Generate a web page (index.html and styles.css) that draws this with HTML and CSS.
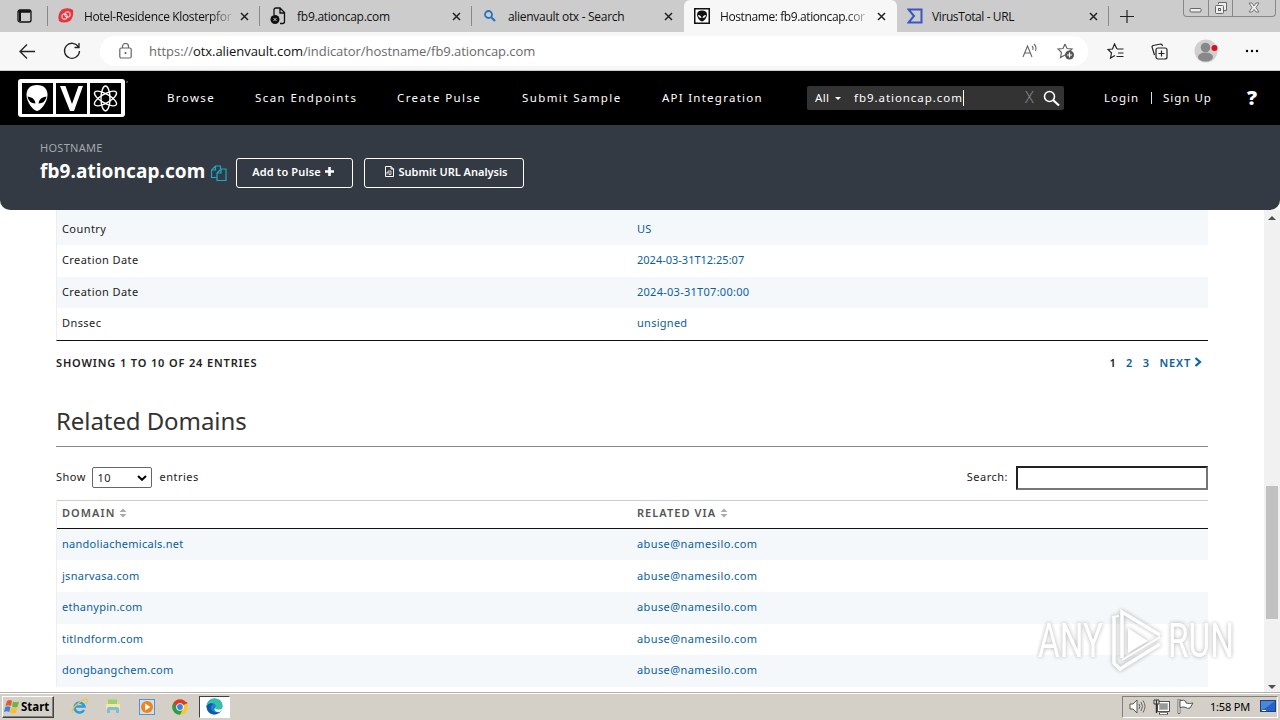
FILE: index.html
```html
<!DOCTYPE html>
<html lang="en">
<head>
    <meta charset="UTF-8">
    <title>Hostname: fb9.ationcap.com</title>
    <link rel="stylesheet" href="styles.css">
</head>
<body>
    <!-- Browser tabs -->
    <div class="tabs">
        <div class="tab-menu">
            <svg width="15" height="14" viewBox="0 0 15 14"><rect x="1" y="1" width="13" height="12" rx="2" fill="none" stroke="#111" stroke-width="1.3"/><path d="M1.500 2.500h12" stroke="#111" stroke-width="2.5"/><path d="M3 3v9" stroke="#111" stroke-width="2"/></svg>
        </div>
        <div class="tab">
            <svg class="favicon" width="16" height="16" viewBox="0 0 16 16"><path d="M4 1.5Q11-1 15 2Q16 9 12 13Q5 16 1 13Q-1 6 4 1.5Z" fill="#e8343c"/><rect x="4" y="6" width="5" height="5" rx="1.5" fill="none" stroke="#fff"/><rect x="7" y="4" width="5" height="5" rx="1.5" fill="none" stroke="#fff"/></svg>
            <span class="tab-title fade">Hotel-Residence Klosterpfor</span>
            <svg class="close" width="9" height="9" viewBox="0 0 9 9"><path d="M1 1l7 7M8 1L1 8"/></svg>
        </div>
        <div class="tab">
            <svg class="favicon" width="16" height="18" viewBox="0 0 16 18"><path d="M4 8V3q0-2 2-2h4l4.500 4.500V14.500q0 2-2 2H10M10 1v5h4.500" fill="none" stroke="#111" stroke-width="1.300"/><circle cx="5" cy="12.500" r="4.500" fill="#111"/><path d="M3.500 11l3 3m0-3l-3 3" stroke="#ccc"/></svg>
            <span class="tab-title short">fb9.ationcap.com</span>
            <svg class="close" width="9" height="9" viewBox="0 0 9 9"><path d="M1 1l7 7M8 1L1 8"/></svg>
        </div>
        <div class="tab last">
            <svg class="favicon" width="16" height="16" viewBox="0 0 16 16"><circle cx="6.500" cy="6.500" r="3.500" fill="none" stroke="#2474bd" stroke-width="1.800"/><path d="M9 9l4 4" stroke="#2474bd" stroke-width="2.200"/></svg>
            <span class="tab-title search-title">alienvault otx - Search</span>
            <svg class="close" width="9" height="9" viewBox="0 0 9 9"><path d="M1 1l7 7M8 1L1 8"/></svg>
        </div>
        <div class="tab active">
            <svg class="favicon" width="16" height="16" viewBox="0 0 16 16"><rect x=".75" y=".75" width="14.500" height="14.500" fill="#fff" stroke="#111" stroke-width="1.500"/><path d="M8 2.500c3 0 5 1.500 5 4 0 3-3 7-5 7s-5-4-5-7c0-2.500 2-4 5-4z" fill="#111"/><path d="M4 7q3 0 3.500 3Q4.500 10 4 7zM12 7q-3 0-3.500 3 3 0 3.500-3z" fill="#fff"/></svg>
            <span class="tab-title fade host-title">Hostname: fb9.ationcap.cor</span>
            <svg class="close" width="9" height="9" viewBox="0 0 9 9"><path d="M1 1l7 7M8 1L1 8"/></svg>
        </div>
        <div class="tab">
            <svg class="favicon" width="16" height="16" viewBox="0 0 16 16"><path d="M1.500 1.500h13v13h-13L7 8z" fill="none" stroke="#3b55c8" stroke-width="2"/></svg>
            <span class="tab-title vt-title">VirusTotal - URL</span>
            <svg class="close" width="9" height="9" viewBox="0 0 9 9"><path d="M1 1l7 7M8 1L1 8"/></svg>
        </div>
        <svg class="new-tab" width="14" height="13" viewBox="0 0 14 13"><path d="M7 0v13M0 6.500h14" stroke="#222" stroke-width="1.200"/></svg>
        <div class="window-buttons">
            <span><svg width="13" height="15" viewBox="0 0 13 15"><rect x="1" y="8.500" width="11" height="3.500" rx="1" fill="#eee" stroke="#666"/></svg></span>
            <span><svg width="14" height="15" viewBox="0 0 14 15"><path d="M4.500 4V2.500h8v8H10" fill="#eee" stroke="#666"/><rect x="1.500" y="5.500" width="8" height="8" rx="1" fill="#eee" stroke="#666"/><rect x="4.500" y="8.500" width="2" height="2" fill="none" stroke="#666"/></svg></span>
            <span class="wide"><svg width="14" height="15" viewBox="0 0 14 15"><path d="M2 3h3l2 3 2-3h3L9 7.500 12 12H9L7 9.500 5 12H2l3-4.500z" fill="#eee" stroke="#777"/></svg></span>
        </div>
    </div>

    <!-- Address bar -->
    <div class="toolbar">
        <svg class="back" width="17" height="15" viewBox="0 0 17 15"><path d="M8 .5L1 7.500l7 7M1 7.500h15" fill="none" stroke="#222" stroke-width="1.300"/></svg>
        <svg class="reload" width="18" height="18" viewBox="0 0 18 18"><path d="M15.500 5A7.500 7.500 0 1 0 16.500 9M16 1v4.500h-4.500" fill="none" stroke="#222" stroke-width="1.300"/></svg>
        <div class="address">
            <svg width="13" height="16" viewBox="0 0 13 16"><rect x=".8" y="5" width="11.400" height="10" rx="1.500" fill="none" stroke="#666" stroke-width="1.200"/><path d="M3.500 5V3.500a3 3 0 0 1 6 0V5" fill="none" stroke="#666" stroke-width="1.200"/><circle cx="6.500" cy="10" r="1" fill="#555"/></svg>
            <span class="url">https://<b>otx.alienvault.com</b>/indicator/hostname/fb9.ationcap.com</span>
            <svg class="read" width="17" height="16" viewBox="0 0 17 16"><path d="M1 14L5.500 3 10 14M2.500 10h6M10 3q1.500 1.500 1 4M12 1q3 3 1.500 7" fill="none" stroke="#666" stroke-width="1.100"/></svg>
            <svg class="fav" width="18" height="17" viewBox="0 0 18 17"><path d="M8 1l2 4.500 5 .5-3.700 3.500M8 12l-4.500 2.500 1-5L1 6l5-.5L8 1" fill="none" stroke="#666" stroke-width="1.200"/><circle cx="12.500" cy="12" r="4.500" fill="#555"/><path d="M10 12h5M12.500 9.500v5" stroke="#fff" stroke-width="1.200"/></svg>
        </div>
        <svg class="t-star" width="18" height="17" viewBox="0 0 18 17"><path d="M10 6L7.500 1 5.500 6 1 6.500l3.500 3.500-1 5L8 12.500M10 6h6.500M11 10h5.500M9.500 13.500h7" fill="none" stroke="#222" stroke-width="1.200"/></svg>
        <svg class="t-coll" width="17" height="17" viewBox="0 0 17 17"><path d="M3.500 12L1 4q0-1 1-1.500L10 1q1 0 1.500 2" fill="none" stroke="#222" stroke-width="1.200"/><rect x="5" y="5" width="11" height="11" rx="2" fill="none" stroke="#222" stroke-width="1.200"/><path d="M10.500 7.500v6M7.500 10.500h6" stroke="#222" stroke-width="1.200"/></svg>
        <svg class="t-user" width="24" height="24" viewBox="0 0 24 24"><circle cx="12" cy="12" r="11.500" fill="#d2d0ce"/><circle cx="11.500" cy="8.500" r="4.800" fill="#888"/><ellipse cx="11.500" cy="18" rx="7.500" ry="4.500" fill="#888"/><circle cx="20.500" cy="9" r="3" fill="#e00b1c"/></svg>
        <svg class="t-more" width="14" height="4" viewBox="0 0 14 4"><circle cx="2" cy="2" r="1.200"/><circle cx="7" cy="2" r="1.200"/><circle cx="12" cy="2" r="1.200"/></svg>
    </div>

    <!-- Site navigation -->
    <div class="site-nav">
        <svg class="logo" width="110" height="40" viewBox="0 0 110 40">
            <rect x="0" y="1" width="107" height="38" rx="3" fill="#fff"/>
            <path d="M4 5h31v31H4zM38 5h31v31H38zM72 5h31v31H72z" fill="#000"/>
            <path d="M19 7c7 0 10.500 4 10.500 10 0 7-7 16-10.500 16S8.500 24 8.500 17C8.500 11 12 7 19 7z" fill="#fff"/>
            <path d="M9.500 18.500q7 .5 8 7-7-.5-8-7zM28.500 18.500q-7 .5-8 7 7-.5 8-7z" fill="#000"/>
            <path d="M42 8h5.500l6.500 18 6.500-18H65L56 33h-4z" fill="#fff"/>
            <g fill="none" stroke="#fff" stroke-width="1.400"><ellipse cx="87.500" cy="20.500" rx="4.500" ry="12.500"/><ellipse cx="87.500" cy="20.500" rx="4.500" ry="12.500" transform="rotate(60 87.500 20.500)"/><ellipse cx="87.500" cy="20.500" rx="4.500" ry="12.500" transform="rotate(120 87.500 20.500)"/></g>
            <path d="M108 4h2" stroke="#888"/>
        </svg>
        <span class="n1">Browse</span>
        <span class="n2">Scan Endpoints</span>
        <span class="n3">Create Pulse</span>
        <span class="n4">Submit Sample</span>
        <span class="n5">API Integration</span>
        <div class="nav-search">
            <span class="all">All</span><i class="caret"></i>
            <span class="query">fb9.ationcap.com</span><i class="cursor"></i>
            <span class="clear">X</span>
            <svg width="17" height="17" viewBox="0 0 17 17"><circle cx="6.500" cy="6.500" r="5" fill="none" stroke="#fff" stroke-width="1.600"/><path d="M10 10l6 5.500" stroke="#fff" stroke-width="2.200"/></svg>
        </div>
        <span class="n6">Login</span>
        <i class="bar"></i>
        <span class="n7">Sign Up</span>
        <span class="help">?</span>
    </div>

    <div class="host-header">
        <div class="host-label">HOSTNAME</div>
        <div class="host-row">
            <span class="host-name">fb9.ationcap.com</span>
            <svg class="copy" width="16" height="17" viewBox="0 0 16 17"><path d="M6.500 12.500h-6V5l4-4h5v3M4.500 1v4h-4M6 15.500V8l4-4h5v11.500zM10 4v4H6" fill="none" stroke="#1aa9c8" stroke-width="1.200"/></svg>
            <div class="btn add"><span>Add to Pulse</span><svg width="9" height="9" viewBox="0 0 9 9"><path d="M4.500 0v9M0 4.500h9" stroke="#fff" stroke-width="2.600"/></svg></div>
            <div class="btn submit"><svg width="9" height="11" viewBox="0 0 9 11"><path d="M.5.500h5.500l2.500 2.500v7.500h-8zM6 0v3h3" fill="none" stroke="#fff"/><path d="M2 8.500V6h2v2.500M3 5h3v3.500H4" fill="none" stroke="#fff" stroke-width=".8"/></svg><span>Submit URL Analysis</span></div>
        </div>
    </div>

    <div class="page">
        <div class="content">
            <div class="table whois">
                <div class="row odd first"><span>Country</span><a>US</a></div>
                <div class="row"><span>Creation Date</span><a class="date">2024-03-31T12:25:07</a></div>
                <div class="row odd"><span>Creation Date</span><a>2024-03-31T07:00:00</a></div>
                <div class="row"><span>Dnssec</span><a>unsigned</a></div>
            </div>
            <div class="paging">
                <span class="showing">SHOWING 1 TO 10 OF 24 ENTRIES</span>
                <span class="pages"><span>1</span><a>2</a><a>3</a><a class="next">NEXT</a><svg width="8" height="10" viewBox="0 0 8 10"><path d="M1.500 1l4.500 4-4.500 4" fill="none" stroke="#0468ad" stroke-width="2.300"/></svg></span>
            </div>
            <h2>Related Domains</h2>
            <div class="controls">
                <span>Show</span>
                <span class="select"><span>10</span><svg width="10" height="6" viewBox="0 0 10 6"><path d="M1 1l4 3.800L9 1" fill="none" stroke="#000" stroke-width="2"/></svg></span>
                <span>entries</span>
                <span class="search-label">Search:</span>
                <input type="text" class="search">
            </div>
            <div class="table domains">
                <div class="head">
                    <span>DOMAIN<svg width="8" height="10" viewBox="0 0 8 10"><path d="M.5 4L4 .5 7.500 4zM.5 6L4 9.500 7.500 6z" fill="#aaa"/></svg></span>
                    <span>RELATED VIA<svg width="8" height="10" viewBox="0 0 8 10"><path d="M.5 4L4 .5 7.500 4zM.5 6L4 9.500 7.500 6z" fill="#aaa"/></svg></span>
                </div>
                <div class="row odd"><a>nandoliachemicals.net</a><a class="mail">abuse@namesilo.com</a></div>
                <div class="row"><a>jsnarvasa.com</a><a class="mail">abuse@namesilo.com</a></div>
                <div class="row odd"><a>ethanypin.com</a><a class="mail">abuse@namesilo.com</a></div>
                <div class="row"><a>titlndform.com</a><a class="mail">abuse@namesilo.com</a></div>
                <div class="row odd"><a>dongbangchem.com</a><a class="mail">abuse@namesilo.com</a></div>
            </div>
        </div>
        <div class="scrollbar">
            <i class="up"></i>
            <i class="thumb"></i>
            <i class="down"></i>
        </div>
        <div class="watermark">
            <span>ANY</span>
            <svg width="58" height="66" viewBox="0 0 58 66"><g fill="none" stroke="#fff" stroke-width="3.500"><path d="M15 50V4l38 23M7 9v46l6 6 40-25"/><path d="M5 9l7-1M15 52L53 29" stroke-width="2"/></g><path d="M21 20v25l20-12z" fill="#fff"/></svg>
            <span>RUN</span>
        </div>
    </div>

    <!-- Windows taskbar -->
    <div class="taskbar">
        <div class="start">
            <svg width="16" height="15" viewBox="0 0 16 15"><path d="M3 2q3-2 5 0L7 7Q4 5.500 1.500 7z" fill="#e8562a"/><path d="M9 2.500q3 1.500 6 0L13.500 8Q11 9 8 7.500z" fill="#6fb53c"/><path d="M1.300 8Q4 6.500 6.500 8L5.300 13Q3 11.500 0 13z" fill="#3d82d6"/><path d="M7.500 8.500q3 1.500 5.800.5L12 14q-3 1-6-.5z" fill="#f6c02c"/></svg>
            <span>Start</span>
        </div>
        <svg class="task" width="17" height="17" viewBox="0 0 17 17"><path d="M13 12A5 5 0 1 1 13.500 8.500H4" fill="none" stroke="#2a9ddf" stroke-width="2.500"/><path d="M2 15Q-1 12 7 5.500T16 2q1 1-1 4" fill="none" stroke="#efc34a" stroke-width="1.300"/></svg>
        <svg class="task" width="17" height="17" viewBox="0 0 17 17"><path d="M1 3h6l1 2h7v8H1z" fill="#f2d47a"/><path d="M3 1.500h9v5H3z" fill="#9bd06d"/><path d="M1 6h14v5H1z" fill="#f8e6a5"/><path d="M2 15v-4q0-2 2-2h8q2 0 2 2v4h-3v-3H5v3z" fill="#79bde8"/></svg>
        <svg class="task" width="16" height="16" viewBox="0 0 16 16"><rect x=".5" y=".5" width="15" height="15" fill="#cbe2f5" stroke="#5b93c9"/><circle cx="8" cy="8" r="6" fill="#ef8418"/><path d="M6 4.500v7L11.500 8z" fill="#fff"/></svg>
        <svg class="task" width="16" height="16" viewBox="0 0 16 16"><circle cx="8" cy="8" r="7.800" fill="#f9c925"/><path d="M8 8L1.300 4A7.800 7.800 0 0 1 14.800 4.300z" fill="#db3a2d"/><path d="M8 8L1.300 4A7.800 7.800 0 0 0 8 15.800L11.500 9z" fill="#2f9c4c"/><path d="M5 8L1.300 4 8 3h7l.5 1.500H8z" fill="#db3a2d"/><circle cx="8" cy="8" r="3.800" fill="#fff"/><circle cx="8" cy="8" r="2.900" fill="#3b7ded"/></svg>
        <div class="task-active">
            <svg width="17" height="17" viewBox="0 0 17 17"><circle cx="8.500" cy="8.500" r="8" fill="#1686d0"/><path d="M1 6Q3 .5 9 .5q7 .5 7.500 7 0 4-5 4-3 0-2-2 1-4-3-4.500Q3 5 .5 9z" fill="#35c1a9"/><path d="M.5 8Q3 4 7 6q-3 2-2 5 2 4 8 3.500Q9 18 4.500 15.500.5 13 .5 8z" fill="#1456a8"/><path d="M9.500 9q-1 2 2 2.500 3 .5 5-1.500-1 4-4 4-4 0-4-3z" fill="#fff"/></svg>
        </div>
        <div class="tray">
            <svg width="17" height="15" viewBox="0 0 17 15"><path d="M1 5h3l4-4v13l-4-4H1z" fill="#fff" stroke="#555"/><path d="M10 5q1.500 2.500 0 5M12 3q3 4.500 0 9M14 1.500q4 6 0 12" fill="none" stroke="#666"/></svg>
            <svg width="17" height="16" viewBox="0 0 17 16"><rect x="5.500" y="3.500" width="10" height="8" fill="#999" stroke="#fff" stroke-width="1.500"/><rect x="4.500" y="2.500" width="12" height="10" fill="none" stroke="#333" stroke-width=".8"/><path d="M6 14.500h9" stroke="#333" stroke-width="2"/><path d="M7 14.500h7" stroke="#fff"/><path d="M1 1h5v4H1z" fill="#fff" stroke="#333"/><path d="M3.500 1v13" stroke="#333" stroke-width="1.500"/></svg>
            <svg width="17" height="15" viewBox="0 0 17 15"><path d="M1 0h2v14.500H1z" fill="#fff" stroke="#555" stroke-width=".8"/><path d="M3 1.500q4-1 6 1V4q3 1 7 0l-3 5q-3 1-4-.5-3-1-6 0z" fill="#fff" stroke="#555"/></svg>
            <span class="clock">1:58 PM</span>
            <svg class="desk" width="16" height="13" viewBox="0 0 16 13"><rect x=".5" y=".5" width="15" height="11" fill="#2462c4" stroke="#1c3f8a"/><path d="M1 1h14L4 9 1 10z" fill="#4b86d8"/><path d="M2 10.500h4" stroke="#fff"/></svg>
        </div>
    </div>
</body>
</html>
```
FILE: styles.css
```css
* {
    box-sizing: border-box;
}

body {
    margin: 0;
    width: 1280px;
    height: 720px;
    overflow: hidden;
    display: flex;
    flex-direction: column;
    font-family: 'Noto Sans', 'Open Sans', sans-serif;
    font-size: 11px;
    color: #222;
    background: #fff;
}

svg {
    display: block;
    flex: none;
}

span {
    white-space: nowrap;
}

/* tabs */
.tabs {
    height: 32px;
    flex: none;
    display: flex;
    align-items: center;
    background: #ccc;
    font-family: 'Open Sans', sans-serif;
    font-size: 12px;
    color: #111;
}

.tab-menu {
    width: 48px;
    padding-left: 17px;
    height: 20px;
    display: flex;
    align-items: center;
    border-right: 1px solid #888;
}

.tab {
    width: 212px;
    height: 20px;
    display: flex;
    align-items: center;
    padding: 0 10px;
    border-right: 1px solid #888;
}

.tab.last {
    border-right-color: transparent;
}

.tab.active {
    height: 32px;
    width: 213px;
    padding-right: 11px;
    background: #f7f7f7;
    border-radius: 6px 6px 0 0;
    border: none;
}

.tab-title {
    width: 148px;
    margin-left: 10px;
    letter-spacing: -0.35px;
}

.short {
    margin-left: 11px;
    letter-spacing: -0.25px;
}

.search-title {
    letter-spacing: -0.3px;
}

.host-title {
    letter-spacing: -0.4px;
}

.vt-title {
    margin-left: 9px;
    letter-spacing: -0.4px;
}

.fade {
    -webkit-mask-image: linear-gradient(90deg, #000 85%, rgba(0, 0, 0, 0.15));
    mask-image: linear-gradient(90deg, #000 85%, rgba(0, 0, 0, 0.15));
}

.close {
    margin-left: auto;
}

.close path {
    stroke: #222;
    stroke-width: 1.5;
}

.new-tab {
    margin-left: 11px;
}

.window-buttons {
    display: flex;
    align-self: flex-start;
    margin-left: 49px;
    height: 17px;
    width: 93px;
    border: 1px solid #888;
    border-top: none;
    border-radius: 0 0 4px 4px;
}

.window-buttons span {
    width: 25px;
    display: flex;
    justify-content: center;
    border-right: 1px solid #888;
}

.window-buttons .wide {
    width: 42px;
    border: none;
}

/* toolbar */
.toolbar {
    height: 39px;
    flex: none;
    display: flex;
    align-items: center;
    background: #f7f7f7;
    border-bottom: 1px solid #ccc;
}

.back {
    margin-left: 19px;
}

.reload {
    margin-left: 27px;
}

.address {
    width: 988px;
    height: 30px;
    margin-left: 19px;
    padding-left: 19px;
    display: flex;
    align-items: center;
    background: #fff;
    border-radius: 15px;
}

.url {
    width: 873px;
    margin-left: 17px;
    font-family: 'Open Sans', sans-serif;
    font-size: 13px;
    letter-spacing: -0.05px;
    color: #6a6a6a;
}

.url b {
    font-weight: normal;
    color: #111;
}

.fav {
    margin-left: 18px;
}

.t-star {
    margin-left: 19px;
}

.t-coll {
    margin-left: 26px;
}

.t-user {
    margin-left: 26px;
}

.t-more {
    margin-left: 27px;
}

/* site navigation */
.site-nav {
    height: 54px;
    flex: none;
    display: flex;
    align-items: center;
    padding-left: 18px;
    background: #000;
    color: #fff;
    font-size: 11.5px;
    letter-spacing: 1.4px;
}

.logo {
    margin-right: 39px;
}

.site-nav span {
    position: relative;
    top: -1px;
}

.n1 { width: 88px; }
.n2 { width: 142px; }
.n3 { width: 125px; }
.n4 { width: 140px; }
.n5 { width: 145px; letter-spacing: 1.25px; }
.n6 { width: 47px; letter-spacing: 1px; }
.n7 { width: 84px; letter-spacing: 1px; }

.nav-search {
    width: 257px;
    height: 24px;
    margin-right: 40px;
    padding-left: 8px;
    display: flex;
    align-items: center;
    background: #333;
    border-radius: 2px;
}

.all {
    width: 20px;
    letter-spacing: 0.3px;
}

.caret {
    border: 3px solid transparent;
    border-top-color: #fff;
    border-bottom: none;
}

.query {
    width: 109px;
    margin-left: 13px;
    letter-spacing: 0.95px;
}

.cursor {
    width: 1px;
    height: 16px;
    background: #fff;
}

.clear {
    width: 18px;
    margin-left: 61px;
    font-size: 16px;
    font-weight: 300;
    color: #888;
}

.bar {
    width: 1px;
    height: 12px;
    margin-right: 11px;
    background: #ddd;
}

.help {
    font-size: 20px;
    font-weight: 900;
}

/* hostname header */
.host-header {
    height: 85px;
    flex: none;
    padding: 15px 40px 0;
    background: #333a43;
    border-radius: 0 0 10px 10px;
    color: #fff;
}

.host-label {
    height: 16px;
    line-height: 16px;
    letter-spacing: 0.3px;
    color: #a3a8ad;
}

.host-row {
    display: flex;
    align-items: center;
    height: 34px;
}

.host-name {
    width: 171px;
    height: 32px;
    line-height: 29px;
    font-size: 19px;
    font-weight: bold;
    letter-spacing: 0.1px;
}

.btn {
    height: 30px;
    display: flex;
    align-items: center;
    justify-content: center;
    padding-bottom: 3px;
    border: 1px solid #fff;
    border-radius: 3px;
    font-weight: 600;
    gap: 4px;
}

.add {
    width: 117px;
    margin-left: 9px;
    padding-right: 3px;
    letter-spacing: 0.15px;
}

.submit {
    width: 160px;
    margin-left: 11px;
    padding-left: 5px;
}

/* page */
.page {
    position: relative;
    height: 482px;
    flex: none;
    display: flex;
    overflow: hidden;
}

.content {
    width: 1152px;
    margin-left: 56px;
}

a {
    color: #0b609c;
}

.row {
    height: 31.6px;
    display: grid;
    grid-template-columns: 575px 1fr;
    align-items: center;
    padding: 0 0 2px 5px;
    letter-spacing: 0.27px;
}

.mail {
    letter-spacing: 0.4px;
}

.date {
    letter-spacing: 0;
}

.whois .row span {
    letter-spacing: 0.42px;
}

.table {
    border-left: 1px solid #eee;
}

.odd {
    background: #f4f8fa;
}

.whois {
    border-bottom: 1px solid #111;
}

.first {
    height: 35px;
    padding-top: 3px;
}

.paging {
    height: 45px;
    display: flex;
    align-items: center;
    justify-content: space-between;
    padding-bottom: 2px;
    font-weight: 600;
    letter-spacing: 0.86px;
}

.pages {
    display: flex;
    align-items: center;
    padding-right: 6px;
}

.pages > span,
.pages a {
    margin-right: 9.5px;
}

.pages .next {
    margin-right: 3px;
}

h2 {
    height: 61px;
    margin: 0;
    padding-top: 18px;
    line-height: 34px;
    border-bottom: 1px solid #888;
    font-size: 24px;
    font-weight: normal;
    letter-spacing: -0.08px;
    color: #333;
}

.controls {
    height: 53px;
    display: flex;
    align-items: center;
    padding-top: 9px;
    letter-spacing: 0.5px;
}

.controls > span:not(.select) {
    padding-bottom: 2px;
}

.select {
    width: 60px;
    height: 21px;
    margin: 0 7px 0 6.5px;
    padding: 0 4px 0 4px;
    display: flex;
    align-items: center;
    justify-content: space-between;
    border: 1px solid #666;
    border-radius: 2px;
}

.search-label {
    margin-left: auto;
    margin-right: 8px;
}

.search {
    width: 192px;
    height: 24px;
    border: 2px inset #767676;
}

.head {
    height: 29px;
    display: grid;
    grid-template-columns: 575px 1fr;
    align-items: center;
    padding: 0 0 3px 5px;
    border-top: 1px solid #ccc;
    border-bottom: 1px solid #111;
    font-weight: 600;
    letter-spacing: 1.05px;
    color: #555;
}

.head span {
    display: flex;
    align-items: center;
    gap: 4px;
}

.scrollbar {
    width: 16px;
    margin-left: auto;
    display: flex;
    flex-direction: column;
    align-items: center;
    background: #f1f1f1;
}

.up {
    margin-top: 6px;
    border: 4px solid transparent;
    border-top: none;
    border-bottom-color: #505050;
}

.thumb {
    width: 12px;
    height: 133px;
    margin-top: 266px;
    background: #c1c1c1;
}

.down {
    margin-top: 66px;
    border: 4px solid transparent;
    border-bottom: none;
    border-top-color: #505050;
}

.watermark {
    position: absolute;
    left: 1038px;
    top: 398px;
    width: 196px;
    display: flex;
    align-items: center;
    justify-content: space-between;
    font-family: 'Roboto', sans-serif;
    font-size: 49px;
    line-height: 66px;
    color: #fff;
    opacity: 0.9;
    filter: drop-shadow(0 0 2px rgba(0, 0, 0, 0.35));
}

.watermark span {
    width: 66px;
    transform: scaleX(0.68);
    transform-origin: left;
}

/* taskbar */
.taskbar {
    height: 28px;
    flex: none;
    display: flex;
    align-items: center;
    padding-left: 2px;
    background: #d4d0c8;
    border-top: 1px solid #b5b1aa;
    box-shadow: inset 0 1px #fff;
}

.start {
    width: 52px;
    height: 22px;
    margin-right: 17px;
    display: flex;
    align-items: center;
    gap: 1px;
    padding-left: 1px;
    border: 1px solid;
    border-color: #fff #404040 #404040 #fff;
    box-shadow: inset -1px -1px #808080;
    font-size: 11.5px;
    font-weight: bold;
    color: #000;
}

.task {
    margin-right: 17px;
}

.task-active {
    width: 31px;
    height: 22px;
    margin-left: -6px;
    display: flex;
    align-items: center;
    justify-content: center;
    background: #fff;
    border: 1px solid;
    border-color: #404040 #fff #fff #404040;
}

.tray {
    width: 156px;
    height: 22px;
    margin-left: auto;
    margin-right: 2px;
    display: flex;
    align-items: center;
    gap: 7px;
    padding-left: 6px;
    border: 1px solid;
    border-color: #808080 #fff #fff #808080;
    color: #000;
}

.clock {
    width: 43px;
    margin-left: 9px;
    letter-spacing: -0.2px;
}
```
